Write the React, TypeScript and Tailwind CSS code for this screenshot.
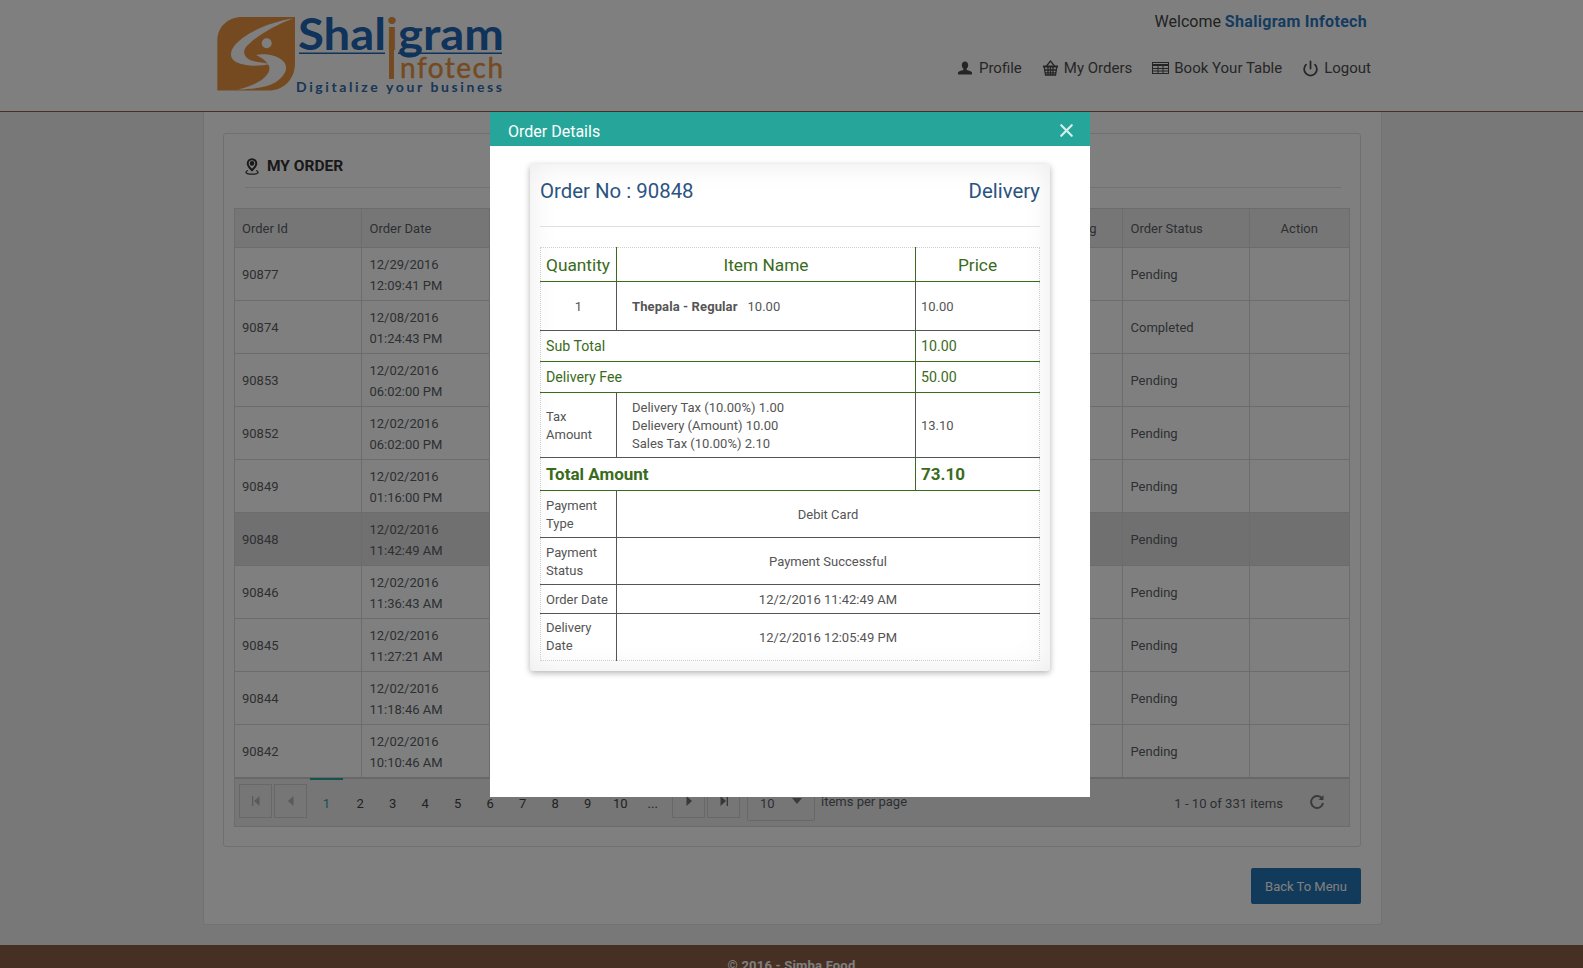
import { Power, X } from 'lucide-react';

const orders = [
  { id: '90877', date: '12/29/2016', time: '12:09:41 PM', status: 'Pending' },
  { id: '90874', date: '12/08/2016', time: '01:24:43 PM', status: 'Completed' },
  { id: '90853', date: '12/02/2016', time: '06:02:00 PM', status: 'Pending' },
  { id: '90852', date: '12/02/2016', time: '06:02:00 PM', status: 'Pending' },
  { id: '90849', date: '12/02/2016', time: '01:16:00 PM', status: 'Pending' },
  { id: '90848', date: '12/02/2016', time: '11:42:49 AM', status: 'Pending' },
  { id: '90846', date: '12/02/2016', time: '11:36:43 AM', status: 'Pending' },
  { id: '90845', date: '12/02/2016', time: '11:27:21 AM', status: 'Pending' },
  { id: '90844', date: '12/02/2016', time: '11:18:46 AM', status: 'Pending' },
  { id: '90842', date: '12/02/2016', time: '10:10:46 AM', status: 'Pending' },
];

const pages = ['2', '3', '4', '5', '6', '7', '8', '9', '10', '...'];

function Logo() {
  return (
    <svg width="290" height="82" viewBox="0 0 290 82" className="block overflow-visible">
      <path d="M26 2 H79 V48 C79 64 68 75 54 75.500 H1.300 V25 C1.300 12 12 2 26 2 Z" fill="#ea9540" />
      <path d="M77.300 3.300 C55 7 30 17 19 30 C13 37 14 44 20 47 C30 52 44 51 54 49 C44 47 35 47 31 43 C26 38 28 33 33 29 C42 20 60 10 77.300 3.300 Z" fill="#fff" />
      <path d="M40 40 C50 38 62 41 67 46 C73 52 70 60 60 67 C50 73 36 74 22 74.500 C34 72 44 67 49 62 C54 57 55 52 51 48 C48 44 44 42 40 40 Z" fill="#fff" />
      <circle cx="50.700" cy="28.300" r="5" fill="#fff" />
      <text x="82" y="35" fontFamily="Lato" fontSize="44" fontWeight="700" fill="#1f66b4" textLength="206" lengthAdjust="spacingAndGlyphs">
        Shal<tspan fill="#ea9540">i</tspan>gram
      </text>
      <rect x="83" y="37.500" width="86" height="1.500" fill="#1f66b4" />
      <rect x="182" y="37.500" width="104" height="1.500" fill="#1f66b4" />
      <rect x="173" y="24" width="5" height="40" fill="#ea9540" />
      <text x="184" y="63" fontFamily="Lato" fontSize="28" fill="#ea9540" stroke="#ea9540" strokeWidth="0.4" textLength="103" lengthAdjust="spacing">nfotech</text>
      <text x="80" y="77" fontFamily="Lato" fontSize="14" fontWeight="700" fill="#2f6cad" textLength="206" lengthAdjust="spacing">Digitalize your business</text>
    </svg>
  );
}

function UserIcon() {
  return (
    <svg width="16" height="16" viewBox="0 0 16 16" fill="#4a4a4a">
      <path d="M8 1.500c2 0 3.200 1.600 3.200 3.600 0 1.600-.7 3-1.600 3.700v1.100c2.400.5 5 1.300 5.400 2.600v2H1v-2c.4-1.300 3-2.100 5.400-2.600V8.800C5.500 8.100 4.800 6.700 4.800 5.100 4.800 3.100 6 1.500 8 1.500z" />
    </svg>
  );
}

function BasketIcon() {
  return (
    <svg width="17" height="16" viewBox="0 0 17 16" fill="none" stroke="#4a4a4a" strokeWidth="1.300">
      <path d="M4.500 6 8.500 1l4 5" />
      <path d="M1 6.500h15" strokeWidth="2" />
      <path d="M2.200 7l1.300 8h10l1.300-8M2.800 10h11.400M3.300 12.800h10.400M6 7v8M8.500 7v8M11 7v8" />
    </svg>
  );
}

function TableIcon() {
  return (
    <svg width="17" height="12" viewBox="0 0 17 12" fill="none" stroke="#4a4a4a" strokeWidth="1">
      <rect x="0.500" y="0.500" width="16" height="11" />
      <path d="M0 3h17" strokeWidth="2" />
      <path d="M0 6.500h17M0 9h17M6 3v9M11 3v9" />
    </svg>
  );
}

function PinIcon() {
  return (
    <svg width="14" height="17" viewBox="0 0 14 17" fill="none" stroke="#333" strokeWidth="2">
      <path d="M7 1.200c-2.500 0-4.300 1.900-4.300 4.200 0 2.600 2.500 5 4.300 6.800 1.800-1.800 4.300-4.200 4.300-6.800 0-2.300-1.800-4.200-4.300-4.200z" />
      <circle cx="7" cy="5.400" r="1.300" fill="#333" />
      <path d="M3 12.500c-1.400.5-2.200 1-2 1.800.2 1 3 1.900 6 1.900s5.800-.9 6-1.900c.2-.8-.6-1.300-2-1.800" strokeWidth="1.200" />
    </svg>
  );
}

function RefreshIcon() {
  return (
    <svg width="16" height="16" viewBox="0 0 15 16" fill="none" stroke="#777" strokeWidth="2">
      <path d="M12.800 5A6 6 0 1 0 13.500 9" />
      <path d="M14 1v5H9" fill="#777" stroke="none" />
    </svg>
  );
}

function PagerButton({ kind }: { kind: 'first' | 'prev' | 'next' | 'last' }) {
  const color = kind === 'first' || kind === 'prev' ? '#b5b5b5' : '#707070';
  return (
    <span className="flex h-[34px] w-[33px] items-center justify-center border border-[#d0d0d0]">
      <svg width="10" height="10" viewBox="0 0 10 10" fill={color}>
        {kind === 'first' && <path d="M1 0h1.300v10H1zM8.500 0v10L3 5z" />}
        {kind === 'prev' && <path d="M7.500 0v10L2 5z" />}
        {kind === 'next' && <path d="M2.500 0v10L8 5z" />}
        {kind === 'last' && <path d="M7.700 0H9v10H7.700zM1.500 0v10L7 5z" />}
      </svg>
    </span>
  );
}

function OrderTable() {
  return (
    <div className="mx-[10px] mt-[20px] border border-[#d8d8d8] text-[13px] leading-[21px] text-[#5a5f66]">
      <table className="w-full table-fixed border-collapse">
        <colgroup>
          <col className="w-[126px]" />
          <col className="w-[128px]" />
          <col />
          <col className="w-[127px]" />
          <col className="w-[100px]" />
        </colgroup>
        <thead>
          <tr className="h-[38px] bg-[#ededed]">
            <th className="border-r border-[#d8d8d8] pl-[7px] pt-[1px] text-left font-normal">Order Id</th>
            <th className="border-r border-[#d8d8d8] pl-[8px] pt-[1px] text-left font-normal">Order Date</th>
            <th className="border-r border-[#d8d8d8] pr-[25px] pt-[1px] text-right font-normal">g</th>
            <th className="border-r border-[#d8d8d8] pl-[8px] pt-[1px] text-left font-normal">Order Status</th>
            <th className="pt-[1px] text-center font-normal">Action</th>
          </tr>
        </thead>
        <tbody>
          {orders.map((order) => (
            <tr key={order.id} className={`h-[53px] border-t border-[#d8d8d8] ${order.id === '90848' ? 'bg-[#e0e0e0]' : ''}`}>
              <td className="border-r border-[#d8d8d8] pl-[7px] pt-[1px]">{order.id}</td>
              <td className="border-r border-[#d8d8d8] pl-[8px] pt-[3px]">
                {order.date}
                <br />
                {order.time}
              </td>
              <td className="border-r border-[#d8d8d8]" />
              <td className="border-r border-[#d8d8d8] pl-[8px] pt-[1px]">{order.status}</td>
              <td />
            </tr>
          ))}
        </tbody>
      </table>
      <div className="relative flex h-[49px] items-center border-t-2 border-[#d0d0d0] bg-[#ededed] pb-[3px] pl-[4px]">
        <div className="flex gap-[2px]">
          <PagerButton kind="first" />
          <PagerButton kind="prev" />
        </div>
        <span className="ml-[3px] mr-[1px] flex h-[46px] w-[33px] items-center justify-center border-t-[2px] border-[#26a69a] pt-[2px] text-[#26a69a]">1</span>
        {pages.map((page) => (
          <span key={page} className="flex w-[32.500px] justify-center pt-[4px] text-[13px] text-[#444]">
            {page}
          </span>
        ))}
        <div className="ml-[3px] flex gap-[2px]">
          <PagerButton kind="next" />
          <PagerButton kind="last" />
        </div>
        <span className="ml-[7px] mt-[5px] flex h-[37px] w-[68px] items-start justify-between self-start rounded-[2px] border border-[#d0d0d0] px-[12px] pt-[8px]">
          10
          <svg width="10" height="6" viewBox="0 0 10 6" className="mt-[5px]" fill="#777">
            <path d="M0 0h10L5 6z" />
          </svg>
        </span>
        <span className="ml-[6px] pt-[1px]">items per page</span>
        <span className="ml-auto pt-[4px] text-[13.100px]">1 - 10 of 331 items</span>
        <span className="ml-[26px] mr-[24px] pt-[1px]">
          <RefreshIcon />
        </span>
      </div>
    </div>
  );
}

function OrderDetails() {
  const line = 'border-b border-[#555]';
  const greenLine = 'border-b border-[#3a6b1c]';
  const cell = 'border-r border-[#555] px-[5px]';
  const greenCell = 'border-r border-[#3a6b1c] px-[5px]';
  return (
    <div className="absolute left-[490px] top-[112px] h-[685px] w-[600px] bg-white">
      <div className="flex h-[34px] items-center justify-between bg-[#26a69a] pl-[18px] pr-[13px] pt-[4px] text-[16px] text-white">
        <span className="pt-[2px]">Order Details</span>
        <X size={21} strokeWidth={2.500} className="mb-[2px] text-[#d6eeec]" />
      </div>
      <div className="mx-[40px] mt-[18px] h-[507px] rounded-[3px] px-[10px] shadow-[0_2px_6px_rgba(0,0,0,0.3),inset_0_0_30px_rgba(0,0,0,0.08)]">
        <div className="flex h-[63px] items-center justify-between border-b border-[#e0e0e0] pb-[8px] text-[20.400px] text-[#2a5480]">
          <span>Order No : 90848</span>
          <span>Delivery</span>
        </div>
        <table className="mt-[20px] w-full table-fixed border-collapse border border-dotted border-[#cfcfcf] text-[13px] leading-[18px] text-[#555]">
          <colgroup>
            <col className="w-[76px]" />
            <col className="w-[299px]" />
            <col />
          </colgroup>
          <tbody>
            <tr className={`h-[34px] text-[17.300px] text-[#3a6b1c] ${greenLine}`}>
              <td className={greenCell}>Quantity</td>
              <td className={`${greenCell} text-center`}>Item Name</td>
              <td className="text-center">Price</td>
            </tr>
            <tr className={`h-[49px] ${line}`}>
              <td className={`${cell} pt-[2px] text-center`}>1</td>
              <td className="border-r border-[#555] pl-[15px] pt-[2px]">
                <b className="font-bold tracking-[0.1px]">Thepala - Regular</b>
                <span className="ml-[10px]">10.00</span>
              </td>
              <td className="px-[5px] pt-[2px]">10.00</td>
            </tr>
            <tr className={`h-[31px] text-[14.200px] text-[#3a6b1c] ${greenLine}`}>
              <td colSpan={2} className={greenCell}>Sub Total</td>
              <td className="px-[5px]">10.00</td>
            </tr>
            <tr className={`h-[31px] text-[14.200px] text-[#3a6b1c] ${greenLine}`}>
              <td colSpan={2} className={greenCell}>Delivery Fee</td>
              <td className="px-[5px]">50.00</td>
            </tr>
            <tr className={`h-[65px] ${line}`}>
              <td className={`${cell} pt-[2px]`}>Tax Amount</td>
              <td className="border-r border-[#555] pl-[15px] pt-[2px]">
                Delivery Tax (10.00%) 1.00
                <br />
                Delievery (Amount) 10.00
                <br />
                Sales Tax (10.00%) 2.10
              </td>
              <td className="px-[5px] pt-[2px]">13.10</td>
            </tr>
            <tr className={`h-[33px] text-[17px] font-bold text-[#3a6b1c] ${greenLine}`}>
              <td colSpan={2} className={`${greenCell} pb-[1px]`}>Total Amount</td>
              <td className="px-[5px] pb-[1px]">73.10</td>
            </tr>
            <tr className={`h-[47px] ${line}`}>
              <td className={`${cell} pt-[1px]`}>Payment Type</td>
              <td colSpan={2} className="pt-[2px] text-center">Debit Card</td>
            </tr>
            <tr className={`h-[47px] ${line}`}>
              <td className={`${cell} pt-[1px]`}>Payment Status</td>
              <td colSpan={2} className="pt-[2px] text-center">Payment Successful</td>
            </tr>
            <tr className={`h-[29px] ${line}`}>
              <td className={`${cell} whitespace-nowrap pt-[1px]`}>Order Date</td>
              <td colSpan={2} className="pt-[1px] text-center">12/2/2016 11:42:49 AM</td>
            </tr>
            <tr className="h-[47px]">
              <td className={cell}>Delivery Date</td>
              <td colSpan={2} className="pt-[2px] text-center">12/2/2016 12:05:49 PM</td>
            </tr>
          </tbody>
        </table>
      </div>
    </div>
  );
}

export default function App() {
  return (
    <div className="relative h-[968px] overflow-hidden bg-[#f0f0f0] font-['Roboto',sans-serif] text-[13px] text-[#5a5f66]">
      <header className="flex h-[112px] justify-between border-b border-[#8c5e46] bg-white pl-[216px] pr-[212px]">
        <div className="pt-[15px]">
          <Logo />
        </div>
        <div className="flex flex-col items-end pt-[11px] text-[15px] text-[#4d4d4d]">
          <div className="mr-[4px] text-[16px] leading-[22px] text-[#444]">
            Welcome <span className="font-bold tracking-[0.3px] text-[#2a76c0]">Shaligram Infotech</span>
          </div>
          <nav className="mt-[24px] flex items-center gap-[20px] leading-[22px]">
            <span className="flex items-center gap-[6px]"><UserIcon />Profile</span>
            <span className="flex items-center gap-[5px]"><BasketIcon />My Orders</span>
            <span className="flex items-center gap-[5px]"><TableIcon />Book Your Table</span>
            <span className="flex items-center gap-[5px]"><Power size={17} strokeWidth={2.500} />Logout</span>
          </nav>
        </div>
      </header>

      <main className="ml-[203px] h-[813px] w-[1179px] rounded-b-[3px] border border-t-0 border-[#e4e4e4] bg-white pl-[19px] pr-[20px] pt-[21px]">
        <section className="h-[714px] rounded-[3px] border border-[#e0e0e0]">
          <div className="ml-[21px] mr-[19px] flex h-[54px] items-center gap-[8px] border-b border-[#e4e4e4] pt-[12px] text-[15.500px] font-bold text-[#333]">
            <PinIcon />
            MY ORDER
          </div>
          <OrderTable />
        </section>
        <div className="mt-[21px] flex justify-end">
          <span className="flex h-[36px] w-[110px] items-center justify-center rounded-[2px] bg-[#2474b4] pt-[1px] text-white">Back To Menu</span>
        </div>
      </main>

      <footer className="mt-[20px] h-[40px] bg-[#8c5e46] pt-[11px] text-center font-bold tracking-[0.2px] text-white">© 2016 - Simba Food</footer>

      <div className="absolute inset-0 bg-black/50" />
      <OrderDetails />
    </div>
  );
}
